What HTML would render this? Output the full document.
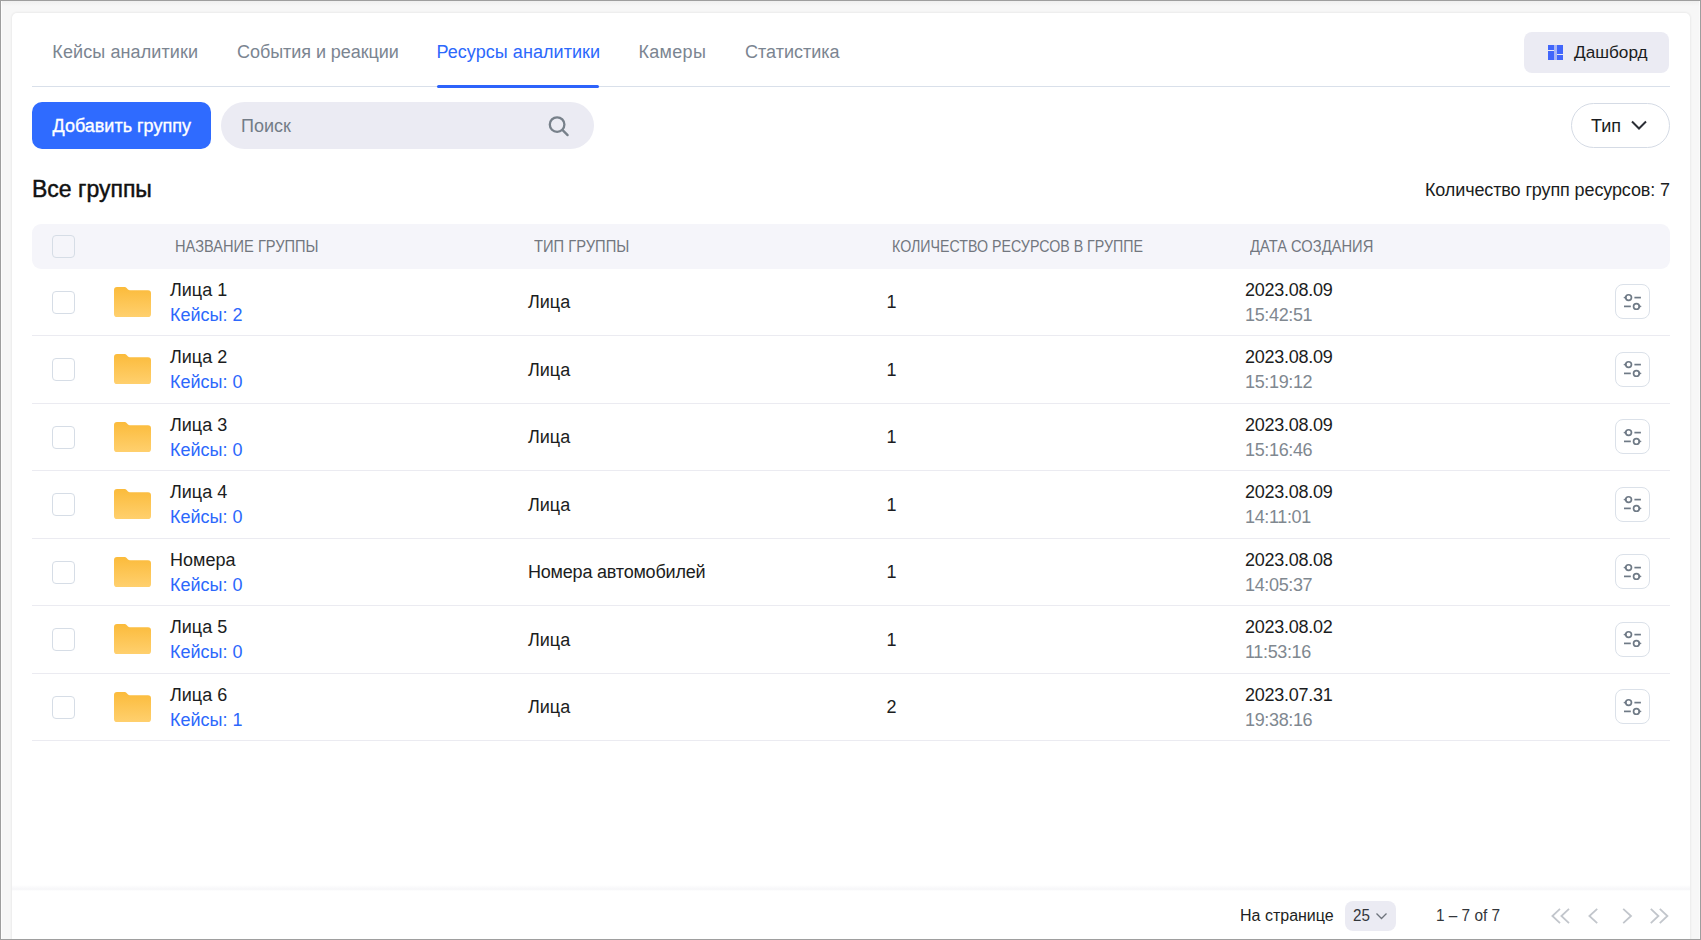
<!DOCTYPE html>
<html><head><meta charset="utf-8">
<style>
*{box-sizing:border-box;margin:0;padding:0}
html,body{width:1701px;height:940px;overflow:hidden;background:#f7f7f7;font-family:"Liberation Sans",sans-serif;color:#1b1d21}
#frame{position:absolute;left:0;top:0;width:1701px;height:940px;border:1px solid #9e9e9e;z-index:10;box-shadow:inset 1px 0 0 0 #fdfdfd,inset -1px 0 0 0 #fbfbfb}
#card{position:absolute;left:12px;top:13px;width:1678px;height:940px;background:#fff;border-radius:5px;box-shadow:0 0 2px 1px rgba(0,0,0,.05)}
.a{position:absolute;white-space:nowrap;line-height:1}
.f18{font-size:18px}
.tab{color:#7b8591;font-size:18px}
.blue{color:#2c68fc}
.hd{font-size:16px;color:#72777f;transform-origin:0 0}
.cb{position:absolute;width:23px;height:23px;border:1px solid #d6dde6;border-radius:4px;background:transparent}
.sep{position:absolute;left:32px;width:1638px;height:1px;background:#ebebf1}
.fold{position:absolute}
.set{position:absolute;width:35px;height:35px;border:1px solid #dbe1e9;border-radius:8px;background:#fff}
.gray{color:#808890}
</style></head><body>
<svg width="0" height="0" style="position:absolute"><defs>
<linearGradient id="fg" x1="0" y1="0" x2="0" y2="1"><stop offset="0" stop-color="#fbbb3b"/><stop offset="1" stop-color="#ffd06e"/></linearGradient>
<symbol id="folder" viewBox="0 0 37 30"><path d="M3 0 H10.6 Q11.8 0 12.6 0.9 L14 2.5 Q14.7 3.3 15.8 3.3 H34 Q37 3.3 37 6.3 V27 Q37 30 34 30 H3 Q0 30 0 27 V3 Q0 0 3 0 Z" fill="url(#fg)"/></symbol>
<symbol id="sliders" viewBox="0 0 35 35"><g fill="none" stroke="#6f7a86" stroke-width="1.7"><circle cx="13.6" cy="13.6" r="2.85"/><path d="M8.8 13.6 L10.9 12.6 L10.9 14.6 Z" stroke-width="0.8" fill="#6f7a86"/><line x1="19.4" y1="13.6" x2="25.9" y2="13.6"/><line x1="9" y1="22.4" x2="15.8" y2="22.4"/><circle cx="21.4" cy="22.4" r="2.85"/><path d="M26.2 22.4 L24.1 21.4 L24.1 23.4 Z" stroke-width="0.8" fill="#6f7a86"/></g></symbol>
</defs></svg>
<div id="frame"></div><div style="position:absolute;left:1px;top:1px;width:1699px;height:5px;background:linear-gradient(#efefef,#f7f7f7)"></div>
<div id="card"></div>

<!-- tabs -->
<div class="a tab" style="left:52.3px;top:43px;letter-spacing:0.1px">Кейсы аналитики</div>
<div class="a tab" style="left:237px;top:43px;letter-spacing:-0.05px">События и реакции</div>
<div class="a tab blue" style="left:436.4px;top:43px;letter-spacing:0.06px">Ресурсы аналитики</div>
<div class="a tab" style="left:638.5px;top:43px;letter-spacing:0.3px">Камеры</div>
<div class="a tab" style="left:745px;top:43px">Статистика</div>
<div style="position:absolute;left:32px;top:86px;width:1638px;height:1px;background:#d9e0ea"></div>
<div style="position:absolute;left:437px;top:85px;width:162px;height:3px;background:#2d63fb;border-radius:2px"></div>

<!-- dashboard btn -->
<div style="position:absolute;left:1524px;top:32px;width:145px;height:41px;background:#ebebf3;border-radius:8px"></div>
<svg style="position:absolute;left:1548px;top:45px" width="15" height="15" viewBox="0 0 15 15"><rect x="6" y="0" width="3" height="15" fill="#a9b6f6"/><g fill="#4166fb"><rect x="0" y="0" width="6" height="5"/><rect x="0" y="6" width="6" height="9"/><rect x="9" y="0" width="6" height="9"/><rect x="9" y="10" width="6" height="5"/></g></svg>
<div class="a f18" style="left:1574px;top:44px;font-size:17.2px">Дашборд</div>

<!-- toolbar -->
<div style="position:absolute;left:32px;top:102px;width:179px;height:47px;background:#2f6bff;border-radius:10px"></div>
<div class="a f18" style="left:52.5px;top:116.8px;color:#fff;-webkit-text-stroke:0.35px #fff">Добавить группу</div>
<div style="position:absolute;left:221px;top:102px;width:373px;height:47px;background:#ebebf3;border-radius:24px"></div>
<div class="a f18" style="left:241px;top:117px;color:#737c87">Поиск</div>
<svg style="position:absolute;left:546px;top:114px" width="24" height="24" viewBox="0 0 24 24"><circle cx="11.1" cy="10.6" r="7.3" fill="none" stroke="#77808a" stroke-width="2.3"/><line x1="16.4" y1="15.9" x2="21.6" y2="21.1" stroke="#77808a" stroke-width="2.3" stroke-linecap="round"/></svg>
<div style="position:absolute;left:1571px;top:103px;width:99px;height:45px;border:1px solid #d5dbe5;border-radius:23px"></div>
<div class="a f18" style="left:1591px;top:117px">Тип</div>
<svg style="position:absolute;left:1630px;top:119px" width="18" height="12" viewBox="0 0 18 12"><path d="M2 2.5 L9 9.5 L16 2.5" fill="none" stroke="#2b2e35" stroke-width="2"/></svg>

<div class="a" style="left:32px;top:178px;font-size:23px;-webkit-text-stroke:0.45px #111;color:#111">Все группы</div>
<div class="a f18" style="right:31px;top:181px;letter-spacing:-0.11px">Количество групп ресурсов: 7</div>

<!-- table header -->
<div style="position:absolute;left:32px;top:224px;width:1638px;height:45px;background:#f5f5fa;border-radius:9px"></div>
<div class="cb" style="left:52px;top:235px"></div>
<div class="a hd" style="left:174.5px;top:239px;transform:scaleX(0.914)">НАЗВАНИЕ ГРУППЫ</div>
<div class="a hd" style="left:533.5px;top:239px;transform:scaleX(0.92)">ТИП ГРУППЫ</div>
<div class="a hd" style="left:891.5px;top:239px;transform:scaleX(0.889)">КОЛИЧЕСТВО РЕСУРСОВ В ГРУППЕ</div>
<div class="a hd" style="left:1250px;top:239px;transform:scaleX(0.92)">ДАТА СОЗДАНИЯ</div>

<div id="rows"><div class="cb" style="left:52px;top:291px"></div>
<svg class="fold" style="left:114px;top:287px" width="37" height="30.2" viewBox="0 0 37 30" preserveAspectRatio="none"><use href="#folder"/></svg>
<div class="a f18" style="left:170px;top:281.26px">Лица 1</div>
<div class="a f18 blue" style="left:170px;top:306.46px">Кейсы: 2</div>
<div class="a f18" style="left:528px;top:292.76px">Лица</div>
<div class="a f18" style="left:886.5px;top:292.76px">1</div>
<div class="a f18" style="left:1245px;top:281.26px;letter-spacing:-0.25px">2023.08.09</div>
<div class="a f18 gray" style="left:1245px;top:306.46px;letter-spacing:-0.35px">15:42:51</div>
<div class="set" style="left:1615px;top:284.0px"></div><svg width="35" height="35" viewBox="0 0 35 35" style="position:absolute;left:1615px;top:284px"><use href="#sliders"/></svg>
<div class="sep" style="top:335.0px"></div>
<div class="cb" style="left:52px;top:358px"></div>
<svg class="fold" style="left:114px;top:354px" width="37" height="30.2" viewBox="0 0 37 30" preserveAspectRatio="none"><use href="#folder"/></svg>
<div class="a f18" style="left:170px;top:348.26px">Лица 2</div>
<div class="a f18 blue" style="left:170px;top:373.46px">Кейсы: 0</div>
<div class="a f18" style="left:528px;top:360.76px">Лица</div>
<div class="a f18" style="left:886.5px;top:360.76px">1</div>
<div class="a f18" style="left:1245px;top:348.26px;letter-spacing:-0.25px">2023.08.09</div>
<div class="a f18 gray" style="left:1245px;top:373.46px;letter-spacing:-0.35px">15:19:12</div>
<div class="set" style="left:1615px;top:351.5px"></div><svg width="35" height="35" viewBox="0 0 35 35" style="position:absolute;left:1615px;top:351px"><use href="#sliders"/></svg>
<div class="sep" style="top:402.5px"></div>
<div class="cb" style="left:52px;top:426px"></div>
<svg class="fold" style="left:114px;top:422px" width="37" height="30.2" viewBox="0 0 37 30" preserveAspectRatio="none"><use href="#folder"/></svg>
<div class="a f18" style="left:170px;top:416.26px">Лица 3</div>
<div class="a f18 blue" style="left:170px;top:441.46px">Кейсы: 0</div>
<div class="a f18" style="left:528px;top:427.76px">Лица</div>
<div class="a f18" style="left:886.5px;top:427.76px">1</div>
<div class="a f18" style="left:1245px;top:416.26px;letter-spacing:-0.25px">2023.08.09</div>
<div class="a f18 gray" style="left:1245px;top:441.46px;letter-spacing:-0.35px">15:16:46</div>
<div class="set" style="left:1615px;top:419.0px"></div><svg width="35" height="35" viewBox="0 0 35 35" style="position:absolute;left:1615px;top:419px"><use href="#sliders"/></svg>
<div class="sep" style="top:470.0px"></div>
<div class="cb" style="left:52px;top:493px"></div>
<svg class="fold" style="left:114px;top:489px" width="37" height="30.2" viewBox="0 0 37 30" preserveAspectRatio="none"><use href="#folder"/></svg>
<div class="a f18" style="left:170px;top:483.26px">Лица 4</div>
<div class="a f18 blue" style="left:170px;top:508.46px">Кейсы: 0</div>
<div class="a f18" style="left:528px;top:495.76px">Лица</div>
<div class="a f18" style="left:886.5px;top:495.76px">1</div>
<div class="a f18" style="left:1245px;top:483.26px;letter-spacing:-0.25px">2023.08.09</div>
<div class="a f18 gray" style="left:1245px;top:508.46px;letter-spacing:-0.35px">14:11:01</div>
<div class="set" style="left:1615px;top:486.5px"></div><svg width="35" height="35" viewBox="0 0 35 35" style="position:absolute;left:1615px;top:486px"><use href="#sliders"/></svg>
<div class="sep" style="top:537.5px"></div>
<div class="cb" style="left:52px;top:561px"></div>
<svg class="fold" style="left:114px;top:557px" width="37" height="30.2" viewBox="0 0 37 30" preserveAspectRatio="none"><use href="#folder"/></svg>
<div class="a f18" style="left:170px;top:551.26px">Номера</div>
<div class="a f18 blue" style="left:170px;top:576.46px">Кейсы: 0</div>
<div class="a f18" style="left:528px;top:562.76px;letter-spacing:-0.2px">Номера автомобилей</div>
<div class="a f18" style="left:886.5px;top:562.76px">1</div>
<div class="a f18" style="left:1245px;top:551.26px;letter-spacing:-0.25px">2023.08.08</div>
<div class="a f18 gray" style="left:1245px;top:576.46px;letter-spacing:-0.35px">14:05:37</div>
<div class="set" style="left:1615px;top:554.0px"></div><svg width="35" height="35" viewBox="0 0 35 35" style="position:absolute;left:1615px;top:554px"><use href="#sliders"/></svg>
<div class="sep" style="top:605.0px"></div>
<div class="cb" style="left:52px;top:628px"></div>
<svg class="fold" style="left:114px;top:624px" width="37" height="30.2" viewBox="0 0 37 30" preserveAspectRatio="none"><use href="#folder"/></svg>
<div class="a f18" style="left:170px;top:618.26px">Лица 5</div>
<div class="a f18 blue" style="left:170px;top:643.46px">Кейсы: 0</div>
<div class="a f18" style="left:528px;top:630.76px">Лица</div>
<div class="a f18" style="left:886.5px;top:630.76px">1</div>
<div class="a f18" style="left:1245px;top:618.26px;letter-spacing:-0.25px">2023.08.02</div>
<div class="a f18 gray" style="left:1245px;top:643.46px;letter-spacing:-0.35px">11:53:16</div>
<div class="set" style="left:1615px;top:621.5px"></div><svg width="35" height="35" viewBox="0 0 35 35" style="position:absolute;left:1615px;top:621px"><use href="#sliders"/></svg>
<div class="sep" style="top:672.5px"></div>
<div class="cb" style="left:52px;top:696px"></div>
<svg class="fold" style="left:114px;top:692px" width="37" height="30.2" viewBox="0 0 37 30" preserveAspectRatio="none"><use href="#folder"/></svg>
<div class="a f18" style="left:170px;top:686.26px">Лица 6</div>
<div class="a f18 blue" style="left:170px;top:711.46px">Кейсы: 1</div>
<div class="a f18" style="left:528px;top:697.76px">Лица</div>
<div class="a f18" style="left:886.5px;top:697.76px">2</div>
<div class="a f18" style="left:1245px;top:686.26px;letter-spacing:-0.25px">2023.07.31</div>
<div class="a f18 gray" style="left:1245px;top:711.46px;letter-spacing:-0.35px">19:38:16</div>
<div class="set" style="left:1615px;top:689.0px"></div><svg width="35" height="35" viewBox="0 0 35 35" style="position:absolute;left:1615px;top:689px"><use href="#sliders"/></svg>
<div class="sep" style="top:740.0px"></div></div><!--/rows-->

<!-- footer -->
<div style="position:absolute;left:12px;top:885px;width:1678px;height:6px;background:linear-gradient(#fff,#f6f6f8 70%,#fff)"></div>
<div class="a" style="left:1240px;top:908px;font-size:16px;color:#1d1f23">На странице</div>
<div style="position:absolute;left:1345px;top:901px;width:51px;height:30px;background:#ebebf3;border-radius:8px"></div>
<div class="a" style="left:1352.5px;top:908px;font-size:16px;color:#33363b;transform:scaleX(0.95);transform-origin:0 0">25</div>
<svg style="position:absolute;left:1375px;top:911px" width="14" height="10" viewBox="0 0 14 10"><path d="M1.5 2.5 L6.5 7.5 L11.5 2.5" fill="none" stroke="#6d737b" stroke-width="1.3"/></svg>
<div class="a" style="left:1436px;top:908px;font-size:16px;color:#33363b;transform:scaleX(0.96);transform-origin:0 0">1 – 7 of 7</div>
<svg style="position:absolute;left:1548px;top:905px" width="124" height="22" viewBox="0 0 124 22"><g fill="none" stroke="#c2c6cc" stroke-width="1.8">
<path d="M12 3.9 L4.4 11 L12 18.1"/><path d="M21 3.9 L13.4 11 L21 18.1"/>
<path d="M49.2 3.9 L41.4 11 L49.2 18.1"/>
<path d="M75.2 3.9 L83 11 L75.2 18.1"/>
<path d="M102.8 3.9 L110.4 11 L102.8 18.1"/><path d="M111.8 3.9 L119.4 11 L111.8 18.1"/></g></svg>
</body></html>
